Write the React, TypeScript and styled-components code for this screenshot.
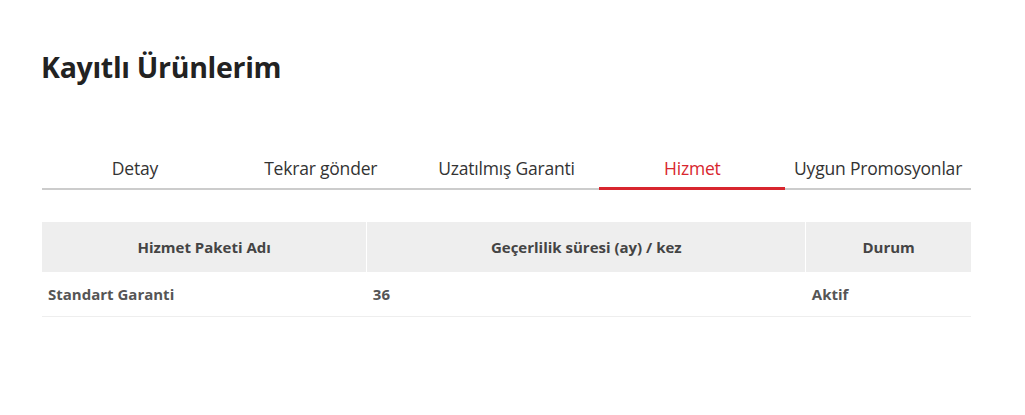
import styled, { createGlobalStyle } from "styled-components";

const GlobalStyle = createGlobalStyle`
  body {
    margin: 0;
    background: #fff;
    font-family: "Open Sans", "Noto Sans", sans-serif;
  }
`;

const Container = styled.div`
  padding: 40px 54px 0 42px;
`;

const Title = styled.h1`
  margin: 0 0 0 -1px;
  font-size: 28.5px;
  font-weight: 700;
  line-height: 54px;
  color: #222;
  letter-spacing: -0.3px;
`;

const Tabs = styled.ul`
  display: grid;
  grid-template-columns: repeat(5, 1fr);
  list-style: none;
  margin: 50px 0 0;
  padding: 0;
  border-bottom: 2px solid #cccccc;
`;

const Tab = styled.li<{ $active?: boolean }>`
  text-align: center;
  font-size: 17.5px;
  line-height: 22px;
  padding: 13px 0 9px;
  color: ${(p) => (p.$active ? "#d8262e" : "#333")};
  position: relative;
  letter-spacing: -0.2px;
  &::after {
    content: "";
    display: ${(p) => (p.$active ? "block" : "none")};
    position: absolute;
    left: 0;
    right: 0;
    bottom: -2px;
    height: 3px;
    background: #d8262e;
  }
`;

const Table = styled.table`
  width: 100%;
  margin-top: 32px;
  border-collapse: collapse;
  font-size: 15px;
`;

const Th = styled.th<{ $w: number }>`
  width: ${(p) => p.$w}px;
  height: 50px;
  background: #eeeeee;
  color: #444;
  font-weight: 700;
  text-align: center;
  padding: 0;
  border-left: 1px solid #fff;
  &:first-child {
    border-left: none;
  }
`;

const Td = styled.td`
  height: 44px;
  padding: 0 6px;
  color: #555;
  font-weight: 700;
  text-align: left;
  border-bottom: 1px solid #eeeeee;
`;

const tabs = ["Detay", "Tekrar gönder", "Uzatılmış Garanti", "Hizmet", "Uygun Promosyonlar"];

export default function App() {
  return (
    <>
      <GlobalStyle />
      <Container>
        <Title>Kayıtlı Ürünlerim</Title>
        <Tabs>
          {tabs.map((t) => (
            <Tab key={t} $active={t === "Hizmet"}>
              {t}
            </Tab>
          ))}
        </Tabs>
        <Table>
          <thead>
            <tr>
              <Th $w={325}>Hizmet Paketi Adı</Th>
              <Th $w={439}>Geçerlilik süresi (ay) / kez</Th>
              <Th $w={165}>Durum</Th>
            </tr>
          </thead>
          <tbody>
            <tr>
              <Td>Standart Garanti</Td>
              <Td>36</Td>
              <Td>Aktif</Td>
            </tr>
          </tbody>
        </Table>
      </Container>
    </>
  );
}
